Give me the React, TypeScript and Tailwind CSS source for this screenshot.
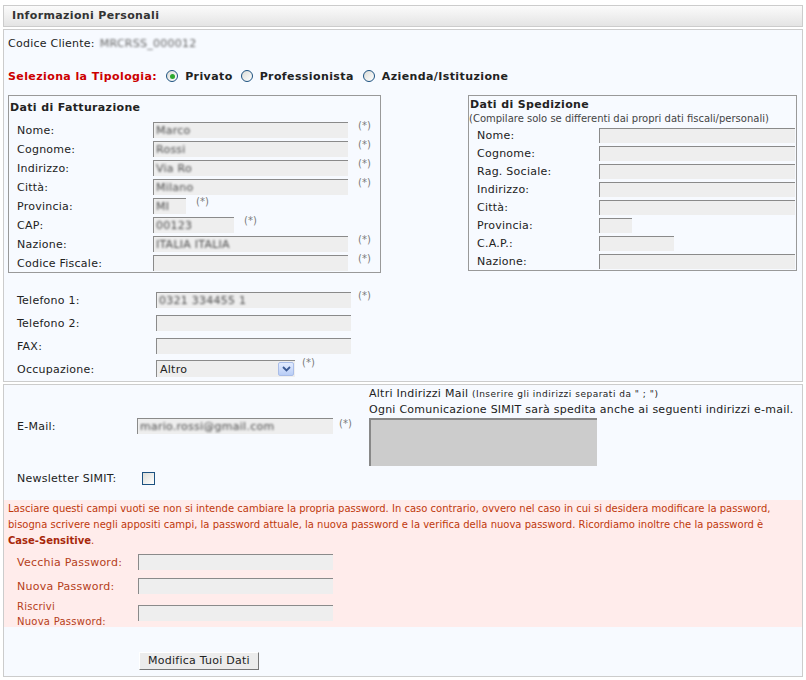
import React from "react";

function Field({ className = "", value }: { className?: string; value?: string }) {
  return (
    <div
      className={`bg-[#eeeeee] border-t border-l border-[#8a8a8a] flex items-center pl-[2px] overflow-hidden shrink-0 ${className}`}
    >
      {value ? (
        <span className="blur-[1.2px] text-[#4a4a4a] text-[11px] whitespace-nowrap leading-none">{value}</span>
      ) : null}
    </div>
  );
}

function Req({ className = "" }: { className?: string }) {
  return <span className={`text-[10px] text-[#7a7a7a] self-start leading-[12px] tracking-normal ${className}`}>(*)</span>;
}

function Radio({ checked }: { checked?: boolean }) {
  return (
    <span className="w-[12px] h-[12px] rounded-full border border-[#1c5180] bg-gradient-to-br from-[#dcdcd7] to-white flex items-center justify-center shrink-0">
      {checked ? <span className="w-[5px] h-[5px] rounded-full bg-[#2da82d]" /> : null}
    </span>
  );
}

const fatt: [string, string, string][] = [
  ["Nome:", "w-[195px]", "Marco"],
  ["Cognome:", "w-[195px]", "Rossi"],
  ["Indirizzo:", "w-[195px]", "Via Ro"],
  ["Città:", "w-[195px]", "Milano"],
  ["Provincia:", "w-[33px]", "MI"],
  ["CAP:", "w-[81px]", "00123"],
  ["Nazione:", "w-[195px]", "ITALIA ITALIA"],
  ["Codice Fiscale:", "w-[195px]", ""],
];

const sped: [string, string][] = [
  ["Nome:", "w-[196px]"],
  ["Cognome:", "w-[196px]"],
  ["Rag. Sociale:", "w-[196px]"],
  ["Indirizzo:", "w-[196px]"],
  ["Città:", "w-[196px]"],
  ["Provincia:", "w-[33px]"],
  ["C.A.P.:", "w-[75px]"],
  ["Nazione:", "w-[196px]"],
];

export default function App() {
  return (
    <div className="w-[806px] h-[680px] bg-white font-['DejaVu_Sans',Verdana,sans-serif] text-[11px] tracking-[0.25px] text-[#222] pt-[5px] px-[3px]">
      {/* header */}
      <div className="h-[22px] border border-[#cccccc] bg-gradient-to-b from-[#fbfbfb] to-[#e4e4e4] flex items-center pl-[8px] pt-[1px] font-bold tracking-[0.35px] text-[#333]">
        Informazioni Personali
      </div>

      {/* panel 1 */}
      <div className="mt-[2px] h-[353px] border border-[#cccccc] bg-[#f7faff] pl-[4px] pr-[5px] pt-[6px]">
        <div className="h-[14px] leading-[14px] flex items-center pt-[2px]">
          <span>Codice Cliente:</span>
          <span className="ml-[5px] blur-[1.2px] text-[#666]">MRCRSS_000012</span>
        </div>

        <div className="mt-[18px] h-[16px] flex items-center font-bold tracking-[0.4px]">
          <span className="text-[#cc0000] pt-[2px]">Seleziona la Tipologia:</span>
          <span className="ml-[9px]"><Radio checked /></span>
          <span className="ml-[7px] pt-[2px]">Privato</span>
          <span className="ml-[8px]"><Radio /></span>
          <span className="ml-[7px] pt-[2px]">Professionista</span>
          <span className="ml-[9px]"><Radio /></span>
          <span className="ml-[7px] pt-[2px]">Azienda/Istituzione</span>
        </div>

        <div className="mt-[11px] flex justify-between items-start">
          {/* Fatturazione */}
          <div className="w-[373px] border border-[#999999]">
            <div className="h-[24px] pt-[5px] pl-[1px] font-bold tracking-[0.35px] leading-[14px]">Dati di Fatturazione</div>
            {fatt.map(([label, w, v]) => (
              <div key={label} className="h-[19px] flex items-center pl-[8px]">
                <span className="w-[136px] shrink-0 pt-[3px]">{label}</span>
                <Field className={`h-[16px] ${w}`} value={v} />
                <Req className="ml-[10px]" />
              </div>
            ))}
          </div>

          {/* Spedizione */}
          <div className="w-[329px] border border-[#999999]">
            <div className="h-[14px] mt-[2px] pl-[1px] font-bold tracking-[0.35px] leading-[14px]">Dati di Spedizione</div>
            <div className="h-[14px] leading-[14px] text-[10px] tracking-normal text-[#444] whitespace-nowrap">
              (Compilare solo se differenti dai propri dati fiscali/personali)
            </div>
            {sped.map(([label, w]) => (
              <div key={label} className="h-[18px] flex items-center pl-[8px]">
                <span className="w-[122px] shrink-0 pt-[3px]">{label}</span>
                <Field className={`h-[15px] ${w}`} />
              </div>
            ))}
          </div>
        </div>

        {/* phones */}
        <div className="mt-[15px] pl-[9px]">
          <div className="h-[23px] flex items-center">
            <span className="w-[139px] shrink-0 pt-[3px]">Telefono 1:</span>
            <Field className="h-[16px] w-[195px]" value="0321 334455 1" />
            <Req className="ml-[7px] mt-[2px]" />
          </div>
          <div className="h-[23px] flex items-center">
            <span className="w-[139px] shrink-0 pt-[3px]">Telefono 2:</span>
            <Field className="h-[16px] w-[195px]" />
          </div>
          <div className="h-[23px] flex items-center">
            <span className="w-[139px] shrink-0 pt-[3px]">FAX:</span>
            <Field className="h-[16px] w-[195px]" />
          </div>
          <div className="h-[23px] flex items-center">
            <span className="w-[139px] shrink-0 pt-[3px]">Occupazione:</span>
            <div className="w-[139px] h-[17px] bg-[#eeeeee] border-t border-l border-[#8a8a8a] flex items-center justify-between pl-[3px] shrink-0">
              <span className="text-[11px] pt-[2px]">Altro</span>
              <div className="w-[16px] h-[14px] mr-[1px] rounded-[2px] border border-[#a9bde8] bg-gradient-to-b from-[#e3ecff] to-[#b9cdf6] flex items-center justify-center">
                <svg width="9" height="6" viewBox="0 0 9 6">
                  <path d="M1 1 L4.5 4.5 L8 1" fill="none" stroke="#3b5a94" strokeWidth="1.8" />
                </svg>
              </div>
            </div>
            <Req className="ml-[7px]" />
          </div>
        </div>
      </div>

      {/* panel 2 */}
      <div className="mt-[2px] h-[293px] border border-[#cccccc] bg-[#f7faff]">
        <div className="flex h-[115px]">
          <div className="w-[365px] pl-[13px] shrink-0">
            <div className="mt-[33px] h-[16px] flex items-center">
              <span className="w-[120px] shrink-0 pt-[3px]">E-Mail:</span>
              <Field className="h-[16px] w-[196px]" value="mario.rossi@gmail.com" />
              <Req className="ml-[6px]" />
            </div>
            <div className="mt-[36px] h-[16px] flex items-center">
              <span className="w-[125px] shrink-0 pt-[3px]">Newsletter SIMIT:</span>
              <span className="w-[13px] h-[13px] border border-[#1c5180] bg-gradient-to-br from-[#dcdcd7] to-white" />
            </div>
          </div>
          <div>
            <div className="h-[16px] leading-[16px] pt-[1px] whitespace-nowrap">
              Altri Indirizzi Mail <span className="text-[9px] tracking-[0.5px]">(Inserire gli indirizzi separati da " ; ")</span>
            </div>
            <div className="h-[16px] leading-[16px] pt-[1px] whitespace-nowrap">
              Ogni Comunicazione SIMIT sarà spedita anche ai seguenti indirizzi e-mail.
            </div>
            <div className="mt-[1px] w-[228px] h-[48px] bg-[#cccccc] border-t-2 border-l-2 border-[#888888]" />
          </div>
        </div>

        <div className="bg-[#ffeceb] h-[127px]">
          <div className="px-[4px] pt-[1px] text-[10px] leading-[16px] tracking-normal text-[#c0390b] whitespace-nowrap">
            Lasciare questi campi vuoti se non si intende cambiare la propria password. In caso contrario, ovvero nel caso in cui si desidera modificare la password,
            <br />
            bisogna scrivere negli appositi campi, la password attuale, la nuova password e la verifica della nuova password. Ricordiamo inoltre che la password è
            <br />
            <b className="text-[#a8280a]">Case-Sensitive</b>.
          </div>
          <div className="pl-[13px] mt-[1px] text-[#b5401a]">
            <div className="h-[24px] flex items-center">
              <span className="w-[121px] shrink-0 pt-[3px]">Vecchia Password:</span>
              <Field className="h-[16px] w-[195px]" />
            </div>
            <div className="h-[24px] flex items-center">
              <span className="w-[121px] shrink-0 pt-[3px]">Nuova Password:</span>
              <Field className="h-[16px] w-[195px]" />
            </div>
            <div className="h-[29px] flex items-center">
              <span className="w-[121px] shrink-0 text-[10px] leading-[15px] pt-[2px]">
                Riscrivi
                <br />
                Nuova Password:
              </span>
              <Field className="h-[16px] w-[195px]" />
            </div>
          </div>
        </div>

        <div className="mt-[25px] ml-[135px] w-[120px] h-[18px] bg-[#ececec] border border-t-white border-l-white border-r-[#777] border-b-[#777] flex items-center justify-center pt-[1px] text-[#222]">
          Modifica Tuoi Dati
        </div>
      </div>
    </div>
  );
}
